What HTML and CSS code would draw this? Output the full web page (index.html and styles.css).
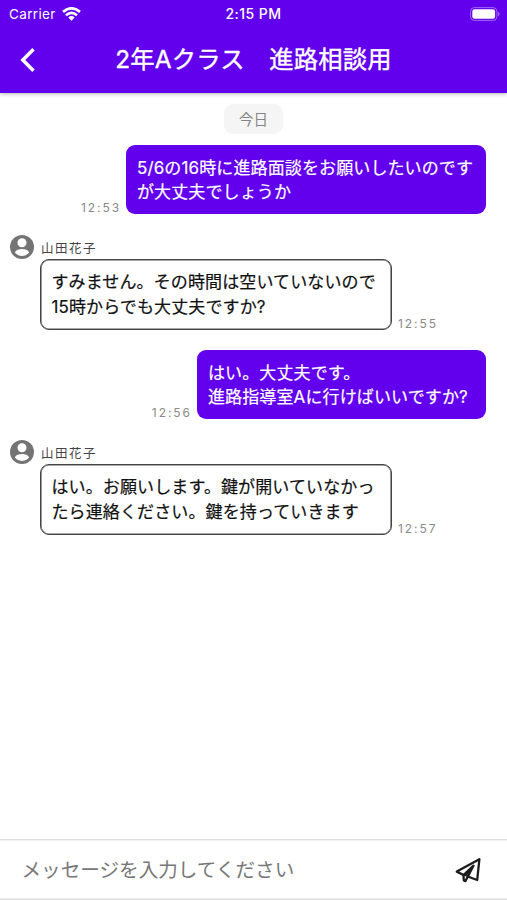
FILE: index.html
```html
<!DOCTYPE html>
<html lang="ja">
<head>
<meta charset="utf-8">
<title>2年Aクラス 進路相談用</title>
<link rel="stylesheet" href="styles.css">
</head>
<body>
<svg width="0" height="0" class="defs">
  <symbol id="avatar" viewBox="0 0 24 24">
    <circle cx="12" cy="12" r="12" fill="#747474"/>
    <circle cx="12" cy="7.800" r="4.500" fill="#fff"/>
    <path d="M4.800 17.600c1.200-2.600 4.200-3.500 7.200-3.500s6 .9 7.200 3.500c-1.600 2-4.300 3.300-7.200 3.300s-5.600-1.300-7.200-3.300z" fill="#fff"/>
  </symbol>
</svg>
<div class="screen">
  <header class="header">
    <div class="status">
      <div class="carrier"><span>Carrier</span>
        <svg width="19" height="14" viewBox="0 0 19 14" fill="none" stroke="#fff" stroke-width="2.700">
          <path d="M1 4.900Q9.500-2.300 18 4.900M4 8.300Q9.500 3.500 15 8.300"/>
          <path d="M6.300 10.400Q9.500 7.700 12.700 10.400L9.500 13.700z" fill="#fff" stroke="none"/>
        </svg>
      </div>
      <div class="clock">2:15 PM</div>
      <div class="power">
        <svg width="30" height="14" viewBox="0 0 30 14">
          <rect x=".6" y=".6" width="26.300" height="12.800" rx="3.800" fill="none" stroke="#fff" stroke-opacity=".4"/>
          <rect x="2.300" y="2.300" width="22.800" height="9.400" rx="2.300" fill="#fff"/>
          <path d="M28 4.700q1.700.7 1.700 2.300t-1.700 2.300z" fill="#fff" fill-opacity=".4"/>
        </svg>
      </div>
    </div>
    <div class="titlebar">
      <svg class="back" width="16" height="26" viewBox="0 0 16 26" fill="none" stroke="#fff" stroke-width="3.500"><path d="M13.500 2.200 2.800 13l10.700 10.800"/></svg>
      <h1>2年Aクラス　進路相談用</h1>
    </div>
  </header>
  <main class="chat">
    <div class="day">今日</div>
    <section class="sent">
      <time>12:53</time>
      <p class="bubble">5/6の16時に進路面談をお願いしたいのです<br>が大丈夫でしょうか</p>
    </section>
    <section class="received">
      <div class="person"><svg width="24" height="24"><use href="#avatar"/></svg><span>山田花子</span></div>
      <div class="line"><p class="bubble">すみません。その時間は空いていないので<br>15時からでも大丈夫ですか?</p><time>12:55</time></div>
    </section>
    <section class="sent short">
      <time>12:56</time>
      <p class="bubble">はい。大丈夫です。<br>進路指導室Aに行けばいいですか?</p>
    </section>
    <section class="received">
      <div class="person"><svg width="24" height="24"><use href="#avatar"/></svg><span>山田花子</span></div>
      <div class="line"><p class="bubble">はい。お願いします。鍵が開いていなかっ<br>たら連絡ください。鍵を持っていきます</p><time>12:57</time></div>
    </section>
  </main>
  <footer class="composer">
    <span class="placeholder">メッセージを入力してください</span>
    <svg class="send" width="28" height="28" viewBox="0 0 28 28" fill="none" stroke="#1c1c1c" stroke-width="2.300" stroke-linejoin="round" stroke-linecap="round">
      <path d="M25.400 3.200 2.800 15.600l6.700 3.400M25.400 3.200l-2.200 20.800-9.500-3.500"/>
      <path d="M19.500 9.700 9.500 19.200l.3 5.200 1.700.7 2.200-4.400z"/>
      <path d="M19.500 9.700 9.500 19.200l3 .8z" fill="#1c1c1c" stroke-width="1"/>
    </svg>
  </footer>
</div>
</body>
</html>
```
FILE: styles.css
```css
* { box-sizing: border-box; }

body {
  margin: 0;
  background: #fff;
  color: #111;
  font-family: Inter, "Noto Sans CJK JP", sans-serif;
}

h1, p { margin: 0; font-weight: 400; }
svg { display: block; flex: none; }
.defs { position: absolute; }

.screen {
  width: 507px;
  height: 900px;
  display: flex;
  flex-direction: column;
  overflow: hidden;
}

.header {
  height: 93px;
  flex: none;
  background: #6200ee;
  color: #fff;
  box-shadow: 0 1px 4px rgba(0, 0, 0, .3);
}

.status {
  height: 27px;
  display: grid;
  grid-template-columns: 1fr auto 1fr;
  align-items: center;
  padding: 0 7px 0 9px;
  font-size: 13.5px;
}

.carrier { display: flex; align-items: center; gap: 6px; letter-spacing: .35px; }
.clock { margin-right: 2px; font-weight: 500; font-size: 14px; letter-spacing: .45px; }
.power { justify-self: end; }

.titlebar {
  height: 66px;
  display: grid;
  grid-template-columns: 40px 1fr 40px;
  align-items: center;
}

.back { margin-left: 20px; }

.titlebar h1 {
  padding-bottom: 2px;
  font-size: 24.3px;
  line-height: 36px;
  letter-spacing: .2px;
  text-align: center;
  white-space: nowrap;
  -webkit-text-stroke: .4px #fff;
}

.chat {
  flex: 1;
  display: flex;
  flex-direction: column;
  padding: 11px 21px 0 10px;
}

.day {
  align-self: center;
  width: 59px;
  height: 30px;
  margin: 0 0 11px 11px;
  border-radius: 9px;
  background: #f5f5f5;
  color: #858585;
  font-size: 14.5px;
  line-height: 31px;
  text-align: center;
}

.bubble {
  flex: none;
  border-radius: 9px;
  font-size: 17px;
  line-height: 24.5px;
  letter-spacing: .12px;
  white-space: nowrap;
  -webkit-text-stroke: .2px currentColor;
}

.sent {
  display: flex;
  align-items: flex-end;
  justify-content: flex-end;
  gap: 5px;
}

.sent .bubble {
  width: 360px;
  height: 69px;
  padding: 10.5px 0 0 11px;
  background: #6200ee;
  color: #fff;
}

.sent.short { margin-top: 20px; }
.sent.short .bubble { width: 289px; }

time {
  color: #8a8a8a;
  font-size: 12px;
  line-height: 12px;
  letter-spacing: 1.95px;
}

.received { margin-top: 21px; }

.person {
  height: 24px;
  display: flex;
  align-items: center;
  gap: 7px;
  color: #444;
  font-size: 12.5px;
  letter-spacing: 1.5px;
}

.line { display: flex; align-items: flex-end; gap: 6px; margin-left: 30px; }

.received .bubble {
  width: 352px;
  height: 71px;
  padding: 10px 0 0 10.5px;
  border: 1px solid #444;
  box-shadow: inset 0 0 0 .6px #555;
  color: #111;
}

.composer {
  height: 61px;
  flex: none;
  display: flex;
  align-items: center;
  justify-content: space-between;
  padding: 0 25px 0 21.5px;
  border-top: 1px solid #ddd;
  border-bottom: 1px solid #ddd;
  box-shadow: inset 0 1px #f1f1f1, inset 0 -1px #eee;
}

.placeholder { padding-bottom: 2px; color: #777; font-size: 19.6px; }
```
